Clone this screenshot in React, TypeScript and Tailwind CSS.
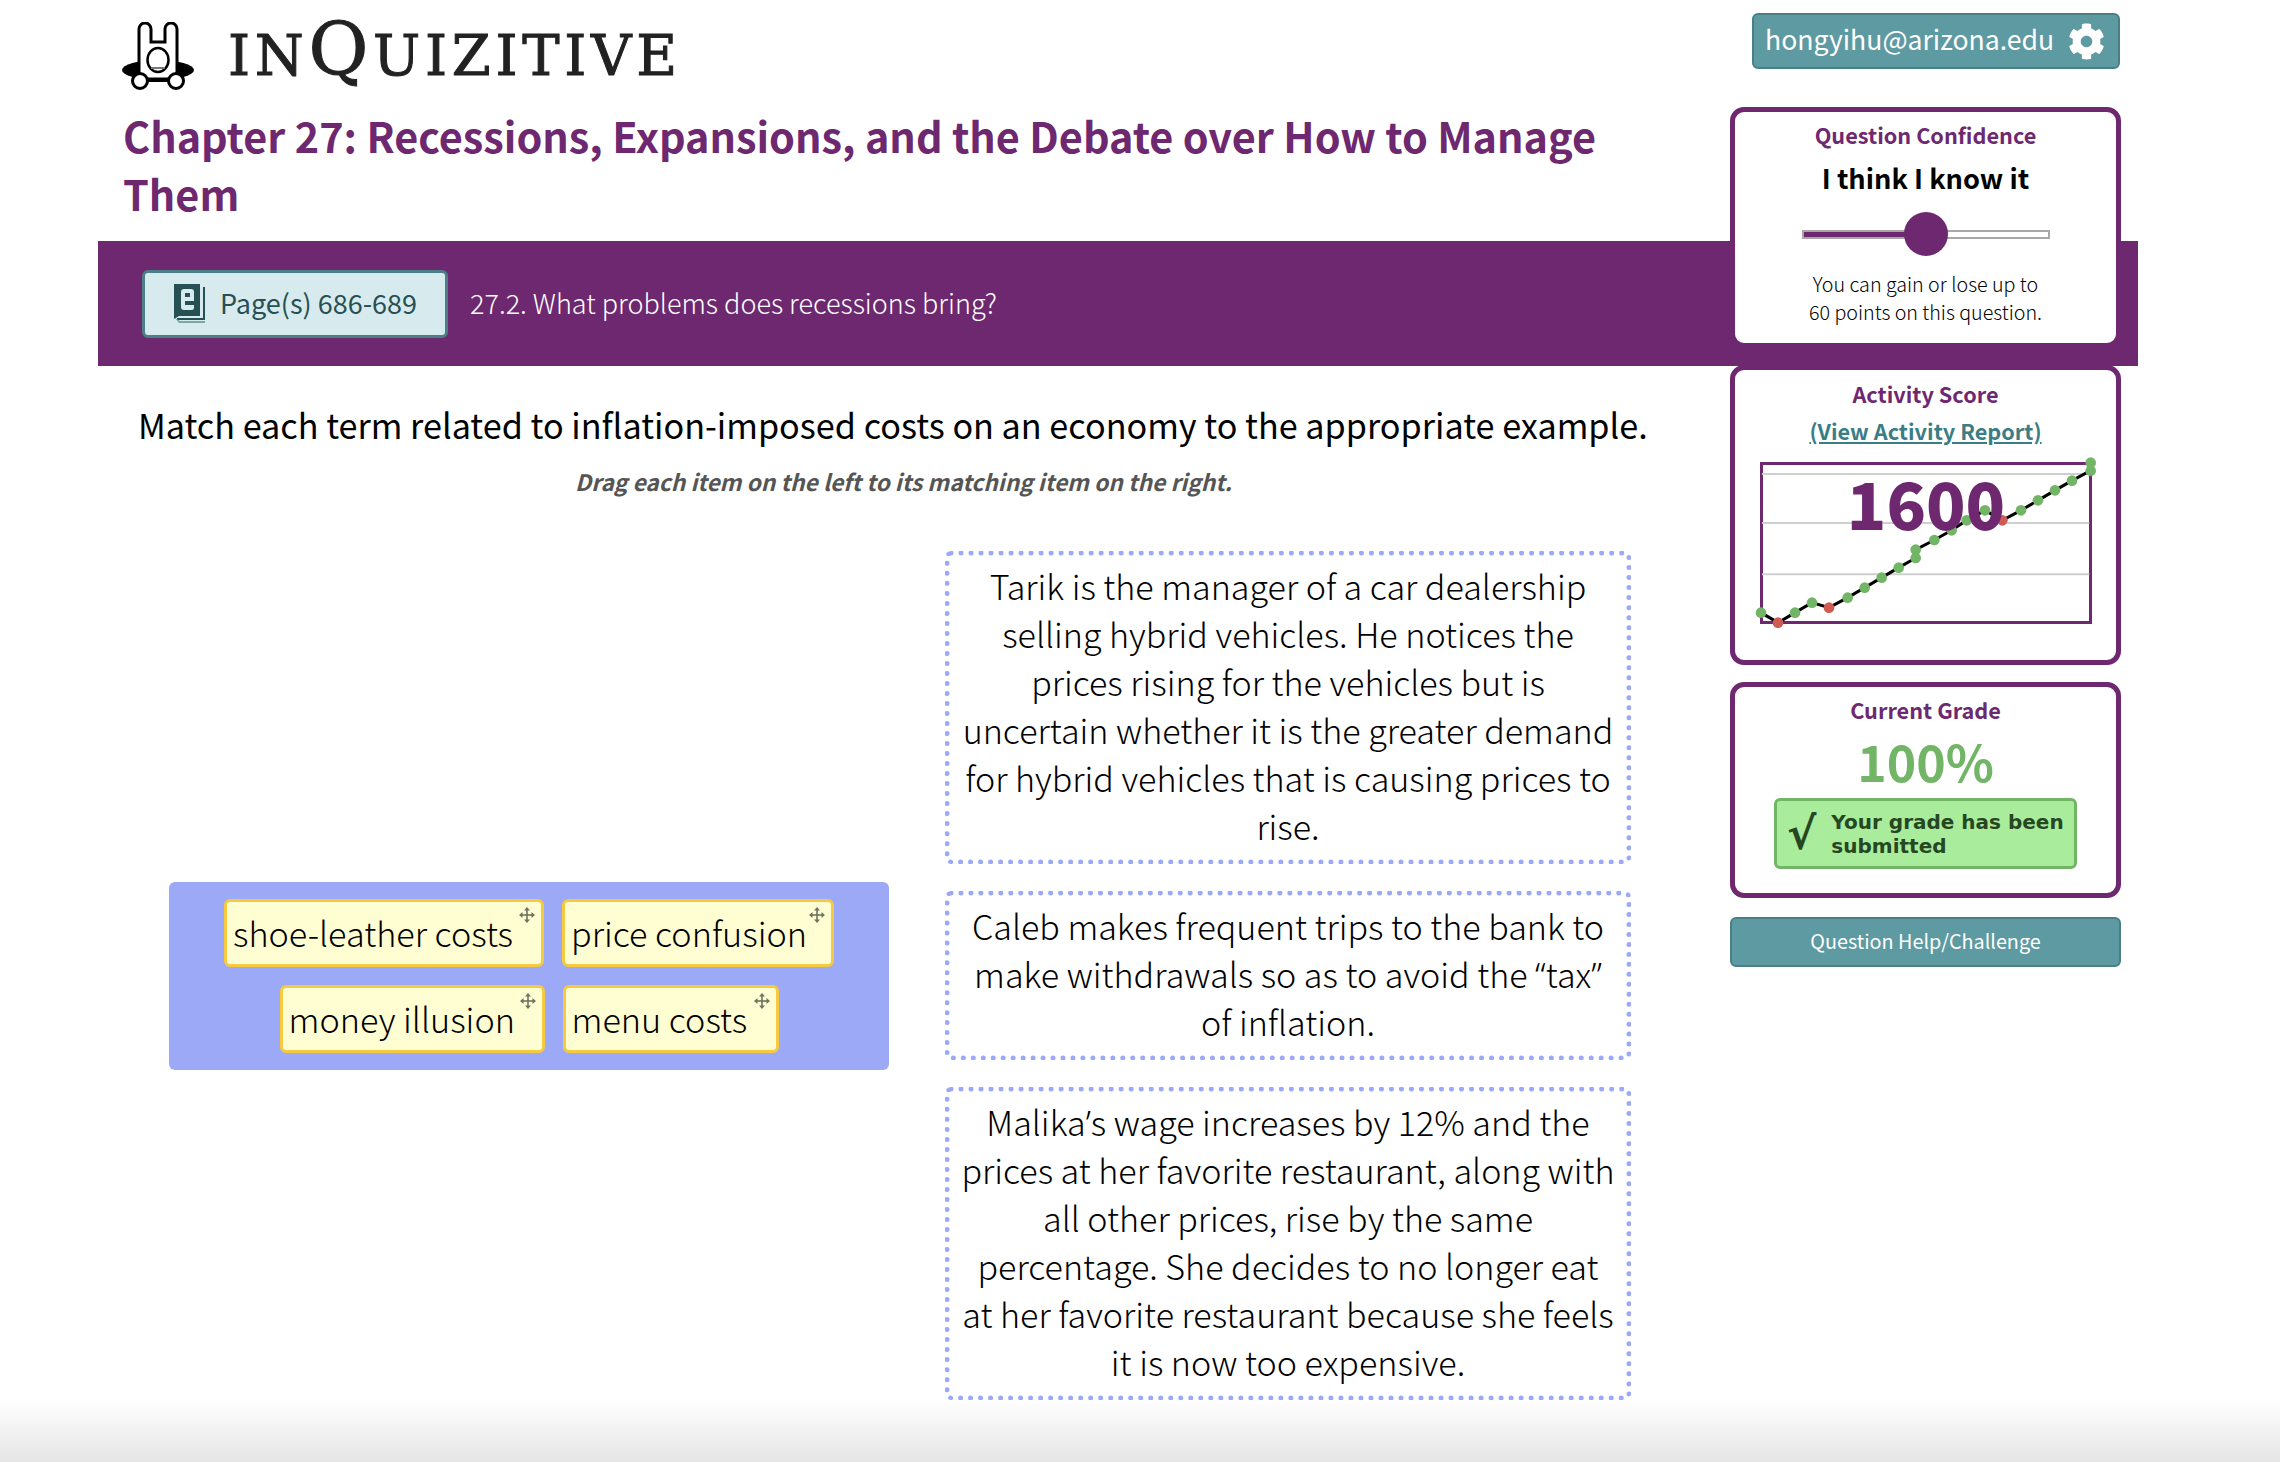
import { FaCog } from "react-icons/fa";

const points: [number, number, string][] = [
  [183, 761, "g"], [234, 791, "r"], [285, 761, "g"], [336, 731, "g"], [387, 746, "r"],
  [443, 716, "g"], [494, 686, "g"], [545, 656, "g"], [596, 626, "g"], [647, 597, "g"],
  [647, 572, "g"], [703, 543, "g"], [755, 514, "g"], [800, 484, "g"], [855, 454, "g"],
  [907, 484, "r"], [963, 454, "g"], [1014, 424, "g"], [1065, 394, "g"], [1116, 365, "g"],
  [1172, 335, "g"], [1172, 311, "g"],
];

function Logo() {
  return (
    <svg width="72" height="68" viewBox="0 0 72 68" className="mt-[22px] shrink-0">
      <ellipse cx="36" cy="48" rx="36" ry="10" fill="#000" />
      <path
        d="M17 50V7a6 6 0 0 1 12 0v13h14V7a6 6 0 0 1 12 0v43l3 7H14z"
        fill="#fff"
        stroke="#000"
        strokeWidth="3"
      />
      <ellipse cx="36" cy="38" rx="10.5" ry="12" fill="#fff" stroke="#000" strokeWidth="2.5" />
      <path d="M29 46h14" stroke="#777" strokeWidth="2" />
      <circle cx="18" cy="59" r="7.5" fill="#fff" stroke="#000" strokeWidth="3" />
      <circle cx="54" cy="59" r="7.5" fill="#fff" stroke="#000" strokeWidth="3" />
      <rect x="25" y="56" width="22" height="4" fill="#000" />
    </svg>
  );
}

function MoveIcon() {
  return (
    <svg width="16" height="16" viewBox="0 0 16 16" className="block" fill="#6f7460">
      <path d="M7.2 3h1.6v10H7.2z" />
      <path d="M3 7.2h10v1.6H3z" />
      <path d="M8 0l3 3.5H5zM8 16l-3-3.5h6zM0 8l3.5-3v6zM16 8l-3.5 3V5z" />
    </svg>
  );
}

function BookIcon() {
  return (
    <svg width="32" height="40" viewBox="0 0 32 40" className="shrink-0">
      <path d="M3 36h28V3h-2v31H3z" fill="#265053" />
      <path d="M1 34l4 5h26v-2H6z" fill="#7fa5a6" />
      <path d="M0 0h26v32H5l-5 3z" fill="#265053" />
      <path
        d="M7 8a3 3 0 0 1 3-3h7a3 3 0 0 1 3 3v9H11v4h9v3a2 2 0 0 1-2 2h-8a3 3 0 0 1-3-3zM11 9v4h5V9z"
        fill="#d7ebee"
        fillRule="evenodd"
      />
    </svg>
  );
}

function Chip({ label, width }: { label: string; width: string }) {
  return (
    <div className={`flex h-[68px] items-center justify-between rounded-md border-[3px] border-[#f7c93e] bg-[#fffed3] pl-[6px] pr-[6px] ${width}`}>
      <span className="whitespace-nowrap text-[34.2px] font-light leading-none text-black">{label}</span>
      <span className="mb-[35px]">
        <MoveIcon />
      </span>
    </div>
  );
}

function DropBox({ children }: { children: React.ReactNode }) {
  return (
    <div className="rounded-md border-[5px] border-dotted border-[#9ca9f6] px-[11px] pb-[10px] pt-[5px] text-center text-[34.1px] font-light leading-[48px] text-black">
      {children}
    </div>
  );
}

// curly quotes come out full width in the CJK face
function Q({ c }: { c: string }) {
  return <span className="font-['Noto_Sans'] leading-[0]">{c}</span>;
}

function ScoreChart() {
  return (
    <div className="relative mx-[25px] mt-[16px] h-[162px] w-[332px] border-[3px] border-[#6e2870]">
      <svg
        className="absolute left-[-6px] top-[-6px] overflow-visible"
        width="340"
        height="170"
        viewBox="171 300 1020 510"
      >
        <path d="M186 345H1168M186 492H1168M186 646H1168" stroke="#cfcfcf" strokeWidth="6" />
        <polyline
          points={points.map((p) => `${p[0]},${p[1]}`).join(" ")}
          fill="none"
          stroke="#000"
          strokeWidth="9"
        />
        {points.map((p, i) => (
          <circle key={i} cx={p[0]} cy={p[1]} r="16" fill={p[2] === "g" ? "#72b566" : "#cf5b52"} />
        ))}
      </svg>
      <div className="absolute inset-x-0 top-[-3px] text-center text-[65px] font-black leading-[80px] text-[#6e2870]">
        1600
      </div>
    </div>
  );
}

function Sidebar() {
  return (
    <aside className="relative z-10 flex w-[391px] flex-col text-center">
      <div className="ml-[22px] flex h-[56px] w-[368px] items-center justify-between rounded-md border-2 border-[#4a7f87] bg-[#5e9aa1] pl-[11px] pr-[13px] text-[26.6px] text-white">
        <span className="mb-[5px]">hongyihu@arizona.edu</span>
        <FaCog className="h-[37px] w-[37px] shrink-0" />
      </div>
      <section className="mt-[38px] h-[241px] rounded-[14px] border-[5px] border-[#6e2870] bg-white pt-[8px]">
        <h3 className="text-[21.7px] font-bold leading-[30px] text-[#6e2870]">Question Confidence</h3>
        <p className="mt-[8px] text-[27.2px] font-bold leading-[38px] text-black">I think I know it</p>
        <div className="relative ml-[67px] mr-[66px] mt-[34px] h-[9px] border-2 border-[#a8a8a8] bg-white">
          <div className="h-full w-[122px] bg-[#6e2870]" />
          <div className="absolute left-[100px] top-[-20px] h-[44px] w-[44px] rounded-full bg-[#6e2870]" />
        </div>
        <p className="mt-[31px] text-[19.7px] font-light leading-[28px] text-black">
          You can gain or lose up to
          <br />
          60 points on this question.
        </p>
      </section>
      <section className="mt-[17px] h-[300px] rounded-[14px] border-[5px] border-[#6e2870] bg-white pt-[9px]">
        <h3 className="text-[21.7px] font-bold leading-[30px] text-[#6e2870]">Activity Score</h3>
        <a className="mt-[7px] block text-[21.7px] font-bold leading-[30px] text-[#3b7d84] underline">
          (View Activity Report)
        </a>
        <ScoreChart />
      </section>
      <section className="mt-[17px] flex h-[216px] flex-col items-center rounded-[14px] border-[5px] border-[#6e2870] bg-white pt-[8px]">
        <h3 className="text-[21.7px] font-bold leading-[30px] text-[#6e2870]">Current Grade</h3>
        <p className="mt-[3px] text-[50px] font-bold leading-[64px] text-[#72b566]">100%</p>
        <div className="mt-[6px] flex h-[71px] w-[303px] items-center gap-[15px] rounded-md border-[3px] border-[#72b566] bg-[#a9ec9c] pl-[10px] text-left text-[#26471f]">
          <span className="w-[30px] font-['DejaVu_Sans'] text-[44px] font-bold leading-none">√</span>
          <span className="font-['DejaVu_Sans'] text-[20px] font-bold leading-[24px]">
            Your grade has been submitted
          </span>
        </div>
      </section>
      <button className="mt-[19px] h-[50px] rounded-md border-2 border-[#4a7f87] bg-[#5e9aa1] pb-[2px] text-[19.8px] text-white">
        Question Help/Challenge
      </button>
    </aside>
  );
}

export default function App() {
  return (
    <div className="relative flex h-[1462px] w-[2280px] overflow-hidden bg-white pl-[98px] font-['Noto_Sans_CJK_SC',sans-serif]">
      <main className="w-[1632px] shrink-0">
        <header className="flex h-[106px] items-start gap-[34px] pl-[24px]">
          <Logo />
          <div className="mt-[13px] flex items-baseline font-['DejaVu_Serif',serif] leading-none tracking-[4.7px] text-[#222] [-webkit-text-stroke:1px_#222]">
            <span className="text-[56px]">IN</span>
            <span className="text-[73px]">Q</span>
            <span className="text-[56px]">UIZITIVE</span>
          </div>
        </header>
        <h1 className="w-[1560px] pl-[25px] text-[41.4px] font-bold leading-[58px] text-[#6e2870]">
          Chapter 27: Recessions, Expansions, and the Debate over How to Manage Them
        </h1>
        <div className="mt-[19px] flex h-[125px] w-[2040px] items-center bg-[#6e2870] pl-[44px]">
          <div className="flex h-[68px] w-[306px] items-center gap-[14px] rounded-md border-[3px] border-[#4a7f87] bg-[#d7ebee] pl-[29px] text-[27px] text-[#265053]">
            <BookIcon />
            <span>Page(s) 686-689</span>
          </div>
          <span className="ml-[22px] text-[27px] font-light text-white">
            27.2. What problems does recessions bring?
          </span>
        </div>
        <p className="ml-[40px] mt-[34px] w-[1509px] whitespace-nowrap text-center text-[34.2px] leading-[48px] text-black">
          Match each term related to inflation-imposed costs on an economy to the appropriate example.
        </p>
        <p className="ml-[477px] mt-[19px] w-[655px] whitespace-nowrap text-center text-[22.7px] font-bold italic leading-[30px] text-[#555]">
          Drag each item on the left to its matching item on the right.
        </p>
        <div className="mt-[54px] flex items-center pl-[71px]">
          <div className="flex w-[720px] flex-wrap justify-center gap-[18px] rounded-md bg-[#9ca9f6] py-[17px]">
            <Chip label="shoe-leather costs" width="w-[320px]" />
            <Chip label="price confusion" width="w-[272px]" />
            <Chip label="money illusion" width="w-[265px]" />
            <Chip label="menu costs" width="w-[216px]" />
          </div>
          <div className="ml-[56px] flex w-[686px] flex-col gap-[27px]">
            <DropBox>
              Tarik is the manager of a car dealership selling hybrid vehicles. He notices the prices rising for the vehicles but is uncertain whether it is the greater demand for hybrid vehicles that is causing prices to rise.
            </DropBox>
            <DropBox>
              Caleb makes frequent trips to the bank to make withdrawals so as to avoid the <Q c="“" />tax<Q c="”" /> of inflation.
            </DropBox>
            <DropBox>
              Malika<Q c="’" />s wage increases by 12% and the prices at her favorite restaurant, along with all other prices, rise by the same percentage. She decides to no longer eat at her favorite restaurant because she feels it is now too expensive.
            </DropBox>
          </div>
        </div>
      </main>
      <div className="pt-[13px]">
        <Sidebar />
      </div>
      <div className="pointer-events-none absolute bottom-0 left-0 h-[62px] w-full bg-gradient-to-b from-white to-[#e5e5e5]" />
    </div>
  );
}
